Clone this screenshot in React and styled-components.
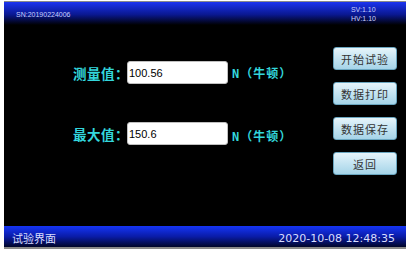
import React from 'react';
import styled, { createGlobalStyle } from 'styled-components';

const GlobalStyle = createGlobalStyle`
  body {
    margin: 0;
    background: #ffffff;
    font-family: "Liberation Sans", "Noto Sans CJK SC", sans-serif;
  }
`;

const Page = styled.div`
  width: 410px;
  height: 256px;
  padding: 1px 4px 0 4px;
  box-sizing: border-box;
`;

const Screen = styled.div`
  width: 402px;
  background: #000;
  border-top: 1px solid #8a8a8a;
  display: flex;
  flex-direction: column;
`;

const Header = styled.div`
  height: 23px;
  background: linear-gradient(to bottom, #1b33f0 0%, #0a1890 55%, #000 100%);
  display: flex;
  justify-content: space-between;
  align-items: flex-start;
  padding: 0 30px 0 12px;
  color: #c8d0ff;
  font-size: 7px;
`;

const Serial = styled.span`
  margin-top: 9px;
`;

const Versions = styled.div`
  display: flex;
  flex-direction: column;
  margin-top: 3px;
  line-height: 9px;
`;

const Main = styled.div`
  height: 201px;
  display: flex;
`;

const Fields = styled.div`
  display: flex;
  flex-direction: column;
  gap: 38px;
  padding: 36px 0 0 69px;
`;

const FieldRow = styled.div`
  display: flex;
  align-items: center;
  height: 23px;
`;

const Label = styled.span`
  width: 54px;
  color: #33d6dc;
  font-family: "Noto Sans CJK SC", sans-serif;
  font-weight: 700;
  font-size: 13.5px;
  letter-spacing: 0.5px;
  white-space: nowrap;
`;

const ValueBox = styled.div`
  width: 98px;
  height: 21px;
  border: 1px solid #c0c0c0;
  border-radius: 3px;
  background: #fff;
  color: #000;
  font-size: 11px;
  display: flex;
  align-items: center;
  padding-left: 1px;
  box-sizing: content-box;
`;

const Unit = styled.span`
  margin-left: 4px;
  margin-top: ${p => p.$shift || 0}px;
  color: #33d6dc;
  font-family: "DejaVu Sans Mono", "Noto Sans CJK SC", monospace;
  font-weight: 700;
  font-size: 12px;
  letter-spacing: 1px;
  white-space: nowrap;
`;

const Buttons = styled.div`
  margin-left: auto;
  display: flex;
  flex-direction: column;
  gap: 12px;
  padding: 22px 9px 0 0;
`;

const ActionButton = styled.button`
  width: 64px;
  height: 23px;
  border: 1px solid #6aa6c0;
  border-radius: 3px;
  background: linear-gradient(to bottom, #e6f4fa 0%, #c4e4f2 50%, #a6d4e8 100%);
  color: #333;
  font-family: "Noto Sans CJK SC", sans-serif;
  font-size: 11px;
  letter-spacing: 1px;
  padding: 0;
`;

const Footer = styled.div`
  height: 21px;
  background: linear-gradient(to bottom, #1535f5 0%, #0a1ca8 50%, #000528 100%);
  border-bottom: 2px solid #8a8a8a;
  display: flex;
  justify-content: space-between;
  align-items: center;
  padding: 0 11px 0 8px;
  color: #d8deff;
`;

const ScreenName = styled.span`
  font-family: "Noto Sans CJK SC", sans-serif;
  font-size: 11px;
  margin-top: 2px;
`;

const Clock = styled.span`
  font-family: "DejaVu Sans", sans-serif;
  font-size: 11px;
  margin-top: 4px;
`;

const fields = [
  { label: '测量值：', value: '100.56', shift: 0 },
  { label: '最大值：', value: '150.6', shift: 4 },
];

const actions = ['开始试验', '数据打印', '数据保存', '返回'];

export default function App() {
  return (
    <Page>
      <GlobalStyle />
      <Screen>
        <Header>
          <Serial>SN:20190224006</Serial>
          <Versions>
            <span>SV:1.10</span>
            <span>HV:1.10</span>
          </Versions>
        </Header>
        <Main>
          <Fields>
            {fields.map(f => (
              <FieldRow key={f.label}>
                <Label>{f.label}</Label>
                <ValueBox>{f.value}</ValueBox>
                <Unit $shift={f.shift}>N（牛顿）</Unit>
              </FieldRow>
            ))}
          </Fields>
          <Buttons>
            {actions.map(a => (
              <ActionButton key={a}>{a}</ActionButton>
            ))}
          </Buttons>
        </Main>
        <Footer>
          <ScreenName>试验界面</ScreenName>
          <Clock>2020-10-08 12:48:35</Clock>
        </Footer>
      </Screen>
    </Page>
  );
}
